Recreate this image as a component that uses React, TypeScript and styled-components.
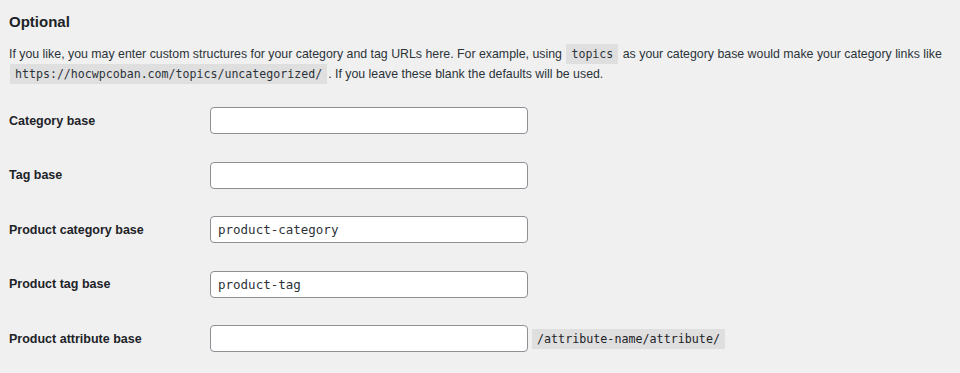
import styled, { createGlobalStyle } from 'styled-components'

const GlobalStyle = createGlobalStyle`
  html, body {
    margin: 0;
    padding: 0;
    background: #f0f0f1;
  }
  body {
    font-family: "Liberation Sans", Arial, sans-serif;
    color: #1d2327;
  }
`

const Wrap = styled.div`
  padding: 10px 9px 0 9px;
  width: 960px;
  box-sizing: border-box;
`

const Heading = styled.h2`
  margin: 0;
  font-size: 15px;
  font-weight: 700;
  line-height: 24px;
`

const Intro = styled.p`
  margin: 10px 0 0;
  font-size: 12.35px;
  line-height: 20px;
  color: #2c3338;
`

const Code = styled.code`
  font-family: "DejaVu Sans Mono", monospace;
  font-size: 11.6px;
  background: rgba(0, 0, 0, 0.07);
  padding: 3px 5px 3px;
  margin: 0 1px;
`

const Table = styled.div`
  margin-top: 23px;
  display: flex;
  flex-direction: column;
  gap: 27.5px;
`

const Row = styled.div`
  display: flex;
  align-items: center;
`

const Label = styled.label`
  width: 201px;
  flex-shrink: 0;
  font-size: 12.5px;
  font-weight: 700;
  color: #1d2327;
`

const Input = styled.input`
  width: 318px;
  height: 27px;
  box-sizing: border-box;
  border: 1px solid #8c8f94;
  border-radius: 4px;
  background: #fff;
  padding: 0 7px;
  font-family: "DejaVu Sans Mono", monospace;
  font-size: 12.5px;
  color: #2c3338;
  outline: none;
`

const Suffix = styled(Code)`
  margin-left: 4px;
  padding: 3px 5px;
  font-size: 11.7px;
`

const fields = [
  { label: 'Category base', value: '' },
  { label: 'Tag base', value: '' },
  { label: 'Product category base', value: 'product-category' },
  { label: 'Product tag base', value: 'product-tag' },
  { label: 'Product attribute base', value: '', suffix: '/attribute-name/attribute/' },
]

export default function App() {
  return (
    <Wrap>
      <GlobalStyle />
      <Heading>Optional</Heading>
      <Intro>
        If you like, you may enter custom structures for your category and tag URLs here. For example, using{' '}
        <Code>topics</Code> as your category base would make your category links like{' '}
        <Code>https://hocwpcoban.com/topics/uncategorized/</Code>. If you leave these blank the defaults will be used.
      </Intro>
      <Table>
        {fields.map((f) => (
          <Row key={f.label}>
            <Label>{f.label}</Label>
            <Input type='text' defaultValue={f.value} />
            {f.suffix && <Suffix>{f.suffix}</Suffix>}
          </Row>
        ))}
      </Table>
    </Wrap>
  )
}
